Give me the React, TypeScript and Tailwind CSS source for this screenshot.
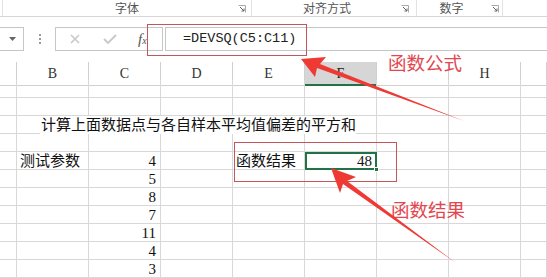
import React from "react";

const COLS = ["", "B", "C", "D", "E", "F", "G", "H", ""];

type Row = { b?: string; c?: string; e?: string; f?: string; long?: string };

const ROWS: Row[] = [
  {},
  {},
  { long: "计算上面数据点与各自样本平均值偏差的平方和" },
  {},
  { b: "测试参数", c: "4", e: "函数结果", f: "48" },
  { c: "5" },
  { c: "8" },
  { c: "7" },
  { c: "11" },
  { c: "4" },
  { c: "3" },
];

const cellFont = { fontFamily: '"Liberation Serif", "Noto Sans CJK SC", serif' };

function Launcher() {
  return (
    <svg width="8" height="8" viewBox="0 0 8 8">
      <path d="M0.5 0.5h7v7" fill="none" stroke="#aaa" strokeWidth="1" />
      <path d="M2 2l4 4M6 3.5V6H3.5" fill="none" stroke="#666" strokeWidth="1" />
    </svg>
  );
}

function Ribbon() {
  return (
    <div
      className="flex h-[17px] border-b border-[#d6d6d6] bg-white text-[12px] text-[#555]"
      style={{ fontFamily: '"Noto Sans CJK SC", sans-serif' }}
    >
      <div className="w-[3px] border-r border-[#e3e3e3]" />
      <div className="relative flex w-[249px] items-center justify-center border-r border-[#e3e3e3]">
        <span className="leading-none">字体</span>
        <span className="absolute right-[5px] top-[5px]"><Launcher /></span>
      </div>
      <div className="relative flex w-[165px] items-center justify-center border-r border-[#e3e3e3]">
        <span className="-ml-[14px] leading-none">对齐方式</span>
        <span className="absolute right-[7px] top-[5px]"><Launcher /></span>
      </div>
      <div className="relative flex w-[86px] items-center justify-center border-r border-[#e3e3e3]">
        <span className="-ml-[16px] leading-none">数字</span>
        <span className="absolute right-[3px] top-[5px]"><Launcher /></span>
      </div>
      <div className="flex-1" />
    </div>
  );
}

function FormulaBar() {
  return (
    <div className="flex h-[43px] items-center bg-white pt-[1px]">
      <div className="flex h-[24px] w-[24px] items-center justify-end border border-l-0 border-[#c6c6c6] pr-[7px]">
        <svg width="7" height="4" viewBox="0 0 7 4">
          <path d="M0 0h7L3.5 4z" fill="#666" />
        </svg>
      </div>
      <div className="flex w-[31px] flex-col items-center justify-center gap-[2px]">
        <span className="h-[2px] w-[2px] bg-[#999]" />
        <span className="h-[2px] w-[2px] bg-[#999]" />
        <span className="h-[2px] w-[2px] bg-[#999]" />
      </div>
      <div className="flex h-[24px] w-[108px] items-center border border-[#c6c6c6]">
        <svg width="12" height="12" viewBox="0 0 12 12" className="ml-[13px]">
          <path d="M2 2l8 8M10 2l-8 8" stroke="#c8c8c8" strokeWidth="1.6" />
        </svg>
        <svg width="14" height="12" viewBox="0 0 14 12" className="ml-[22px]">
          <path d="M1 6l4 4 8-8" fill="none" stroke="#c8c8c8" strokeWidth="1.8" />
        </svg>
        <span
          className="ml-[21px] text-[15px] italic text-[#555]"
          style={{ fontFamily: '"Liberation Serif", serif' }}
        >
          f<span className="text-[10px]">x</span>
        </span>
      </div>
      <div className="ml-[2px] flex h-[24px] flex-1 items-center border border-r-0 border-[#c6c6c6] pl-[17px]">
        <span
          className="text-[13.5px] text-[#222]"
          style={{ fontFamily: '"Liberation Mono", monospace' }}
        >
          =DEVSQ(C5:C11)
        </span>
      </div>
    </div>
  );
}

function HeaderRow() {
  return (
    <div className="grid h-[20px] grid-cols-[17px_repeat(7,72px)_1fr] bg-white" style={cellFont}>
      {COLS.map((c, i) => (
        <div
          key={i}
          className={
            c === "F"
              ? "mt-[2px] flex items-center justify-center border-b-2 border-r border-b-[#217346] border-r-[#d0d0d0] bg-[#d6d6d6] pt-[1px] text-[14px] text-[#222]"
              : "mt-[2px] flex items-center justify-center border-b border-r border-[#d0d0d0] text-[14px] text-[#333]"
          }
        >
          {c === "G" ? "" : c}
        </div>
      ))}
    </div>
  );
}

function GridRow({ row }: { row: Row }) {
  const base = "h-[18px] border-b border-r border-[#d8d8d8] text-[15px] leading-[18px] text-[#111] whitespace-nowrap";
  return (
    <div className="grid grid-cols-[17px_repeat(7,72px)_1fr]" style={cellFont}>
      <div className={base} />
      <div className={base + " pl-[3px]"}>{row.b}</div>
      <div className={base + " relative pr-[4px] text-right"}>
        {row.long ? (
          <span className="absolute left-[-49px] top-0 z-10 bg-white pl-[1px]">{row.long}</span>
        ) : (
          row.c
        )}
      </div>
      <div className={base} />
      <div className={base + " pl-[3px]"}>{row.e}</div>
      <div
        className={
          row.f
            ? "relative h-[18px] border-2 border-[#217346] pr-[3px] text-right text-[15px] leading-[14px] text-[#111]"
            : base
        }
      >
        {row.f}
        {row.f && <span className="absolute -bottom-[4px] -right-[4px] h-[5px] w-[5px] border border-white bg-[#217346]" />}
      </div>
      <div className={base} />
      <div className={base} />
      <div className={base} />
    </div>
  );
}

function Annotations() {
  const red = "#ee3a33";
  return (
    <div className="pointer-events-none absolute inset-0">
      <div className="absolute left-[147px] top-[24px] h-[32px] w-[160px] border border-[#c4555b]" />
      <div className="absolute left-[234px] top-[142px] h-[40px] w-[163px] border border-[#c4555b]" />
      <div
        className="absolute left-[388px] top-[53px] text-[18.5px] leading-none text-[#e2474f]"
        style={{ fontFamily: '"Noto Sans CJK SC", sans-serif' }}
      >
        函数公式
      </div>
      <div
        className="absolute left-[391px] top-[200px] text-[18.5px] leading-none text-[#e2474f]"
        style={{ fontFamily: '"Noto Sans CJK SC", sans-serif' }}
      >
        函数结果
      </div>
      <svg className="absolute inset-0" width="547" height="278" viewBox="0 0 547 278">
        <polygon points="301,59 326,57 320,64 464,121 317,68 315,77" fill={red} />
        <polygon points="331,168 356,177 347,181 456,263 343,184 340,193" fill={red} />
      </svg>
    </div>
  );
}

export default function App() {
  return (
    <div className="relative h-[278px] w-[547px] overflow-hidden bg-white">
      <Ribbon />
      <FormulaBar />
      <HeaderRow />
      {ROWS.map((r, i) => (
        <GridRow key={i} row={r} />
      ))}
      <Annotations />
    </div>
  );
}
